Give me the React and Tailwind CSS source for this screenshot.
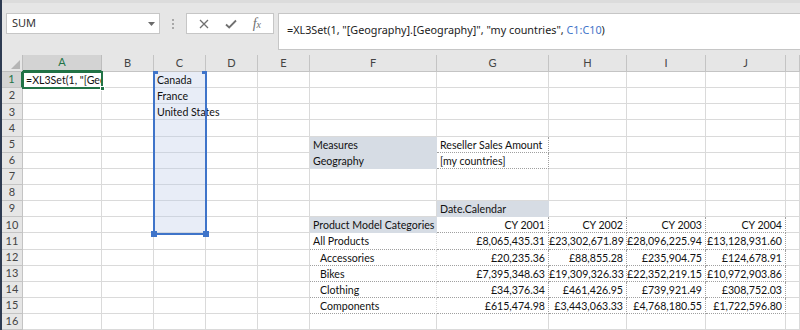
import React from 'react';

const COLS = ['A', 'B', 'C', 'D', 'E', 'F', 'G', 'H', 'I', 'J', 'K'];
const ROWS = Array.from({ length: 17 }, (_, i) => i + 1);

const FORMULA = '=XL3Set(1, "[Geography].[Geography]", "my countries", C1:C10)';

const values = {
    11: ['£8,065,435.31', '£23,302,671.89', '£28,096,225.94', '£13,128,931.60'],
    12: ['£20,235.36', '£88,855.28', '£235,904.75', '£124,678.91'],
    13: ['£7,395,348.63', '£19,309,326.33', '£22,352,219.15', '£10,972,903.86'],
    14: ['£34,376.34', '£461,426.95', '£739,921.49', '£308,752.03'],
    15: ['£615,474.98', '£3,443,063.33', '£4,768,180.55', '£1,722,596.80'],
};
const products = { 11: 'All Products', 12: 'Accessories', 13: 'Bikes', 14: 'Clothing', 15: 'Components' };

const grid = 'border-r border-b border-[#dadada]';
const dotted = 'border-r border-b border-dotted border-[#a0a0a0]';
const shaded = 'bg-[#d6dce4] border-r border-b border-[#d6dce4]';

// what goes in each cell
const cellInfo = (r, c) => {
    const key = c + r;
    if (key === 'A1') return { text: FORMULA, cls: grid + ' overflow-hidden' };
    if (c === 'C' && r <= 10) {
        const t = { 1: 'Canada', 2: 'France', 3: 'United States' }[r];
        return { text: t, cls: 'bg-[#e8edf7] border-r border-b border-[#cfd5df]' };
    }
    if (key === 'F5') return { text: 'Measures', cls: shaded };
    if (key === 'F6') return { text: 'Geography', cls: shaded };
    if (key === 'G5') return { text: 'Reseller Sales Amount', cls: dotted };
    if (key === 'G6') return { text: '[my countries]', cls: dotted };
    if (key === 'G9') return { text: 'Date.Calendar', cls: shaded };
    if (key === 'F10') return { text: 'Product Model Categories', cls: shaded };
    if (r === 10 && 'GHIJ'.includes(c)) {
        return { text: 'CY ' + (2001 + 'GHIJ'.indexOf(c)), right: true, cls: dotted };
    }
    if (r >= 11 && r <= 15) {
        if (c === 'F') return { text: products[r], indent: r > 11, cls: 'border-r border-[#dadada] border-b border-b-[#a0a0a0] border-dotted' };
        if ('GHIJ'.includes(c)) return { text: values[r]['GHIJ'.indexOf(c)], right: true, cls: dotted };
    }
    return { text: '', cls: grid };
};

const NameBox = () => (
    <div className="w-[154px] h-[21px] bg-white border border-[#c6c6c6] flex items-center justify-between pl-[5px] pr-[4px]">
        <span className="text-[11px] text-[#333] font-['Noto_Sans',sans-serif]">SUM</span>
        <svg width="7" height="4" viewBox="0 0 7 4"><path d="M0 0h7L3.5 4z" fill="#6a6a6a" /></svg>
    </div>
);

const FormulaButtons = () => (
    <div className="w-[88px] h-[21px] bg-white border border-[#c6c6c6] flex items-center justify-around px-[4px]">
        <svg width="10" height="10" viewBox="0 0 10 10">
            <path d="M1 1l8 8M9 1l-8 8" stroke="#707070" strokeWidth="1.3" />
        </svg>
        <svg width="12" height="10" viewBox="0 0 12 10">
            <path d="M1 5.5l3.2 3L11 1.5" stroke="#707070" strokeWidth="1.8" fill="none" />
        </svg>
        <span className="text-[14px] italic text-[#707070] font-['Liberation_Serif',serif] leading-none">
            f<span className="text-[10px]">x</span>
        </span>
    </div>
);

const Toolbar = () => (
    <div className="h-[55px] flex items-start pt-[10px] border-t-[3px] border-[#dcdcdc]">
        <div className="ml-[4px]">
            <NameBox />
        </div>
        <div className="w-[26px] h-[21px] flex flex-col items-center justify-center gap-[2px]">
            <span className="w-[2px] h-[2px] bg-[#a8a8a8]" />
            <span className="w-[2px] h-[2px] bg-[#a8a8a8]" />
            <span className="w-[2px] h-[2px] bg-[#a8a8a8]" />
        </div>
        <FormulaButtons />
        <div className="ml-[4px] flex-1 h-[37px] bg-white border border-r-0 border-[#c6c6c6] pl-[8px] pt-[2px]">
            <span className="text-[10.8px] text-[#222] font-['Noto_Sans',sans-serif] whitespace-nowrap">
                =XL3Set(1, "[Geography].[Geography]", "my countries", <span className="text-[#3f74c9]">C1:C10</span>)
            </span>
        </div>
    </div>
);

const Sheet = () => (
    <div className="relative grid grid-cols-[21px_79px_52px_52px_52px_52px_127px_112px_78px_79px_80px_1fr] grid-rows-[17px] auto-rows-[16.15px] bg-white font-['Lato',sans-serif] text-[10.6px] text-[#111]">
        {/* corner */}
        <div className="bg-[#e6e6e6] border-r border-b border-[#bdbdbd] flex items-end justify-end p-[2px]">
            <svg width="9" height="9" viewBox="0 0 9 9"><path d="M9 0v9H0z" fill="#b5b5b5" /></svg>
        </div>
        {COLS.map((c) => (
            <div
                key={c}
                className={
                    c === 'A'
                        ? 'bg-[#d3d3d3] border-r border-[#bdbdbd] border-b-2 border-b-[#217346] flex items-center justify-center text-[#217346] text-[11px]'
                        : 'bg-[#e6e6e6] border-r border-b border-[#c4c4c4] flex items-center justify-center text-[#444] text-[11px]'
                }
            >
                {c === 'K' ? '' : c}
            </div>
        ))}
        {ROWS.map((r) => (
            <React.Fragment key={r}>
                <div
                    className={
                        r === 1
                            ? 'bg-[#d3d3d3] border-b border-[#c4c4c4] border-r-2 border-r-[#217346] flex items-center justify-center text-[#217346] text-[11px]'
                            : 'bg-[#e6e6e6] border-r border-b border-[#c4c4c4] flex items-center justify-center text-[#444] text-[11px]'
                    }
                >
                    {r <= 16 ? r : ''}
                </div>
                {COLS.map((c) => {
                    const info = cellInfo(r, c);
                    return (
                        <div
                            key={c}
                            className={
                                info.cls +
                                ' whitespace-nowrap leading-[16px] ' +
                                (info.right ? 'text-right pr-[3px]' : info.indent ? 'pl-[10px]' : 'pl-[3px]')
                            }
                        >
                            {info.text}
                        </div>
                    );
                })}
            </React.Fragment>
        ))}

        {/* active cell A1 */}
        <div className="absolute left-[20px] top-[16px] w-[81px] h-[18px] border-2 border-[#217346] pointer-events-none">
            <span className="absolute -right-[4px] -bottom-[4px] w-[5px] h-[5px] bg-[#217346] border border-white" />
        </div>

        {/* referenced range C1:C10 */}
        <div className="absolute left-[151px] top-[17px] w-[54px] h-[163px] border-2 border-t-0 border-[#3f74c9] pointer-events-none">
            <span className="absolute -left-[2px] -top-[1px] w-[5px] h-[3px] bg-[#3f74c9]" />
            <span className="absolute -right-[2px] -top-[1px] w-[5px] h-[3px] bg-[#3f74c9]" />
            <span className="absolute -left-[4px] -bottom-[4px] w-[6px] h-[6px] bg-[#3f74c9]" />
            <span className="absolute -right-[4px] -bottom-[4px] w-[6px] h-[6px] bg-[#3f74c9]" />
        </div>
    </div>
);

export default function App() {
    return (
        <div className="w-[800px] h-[330px] overflow-hidden bg-[#e6e6e6] border-l-2 border-[#2e3b52]">
            <Toolbar />
            <Sheet />
        </div>
    );
}
